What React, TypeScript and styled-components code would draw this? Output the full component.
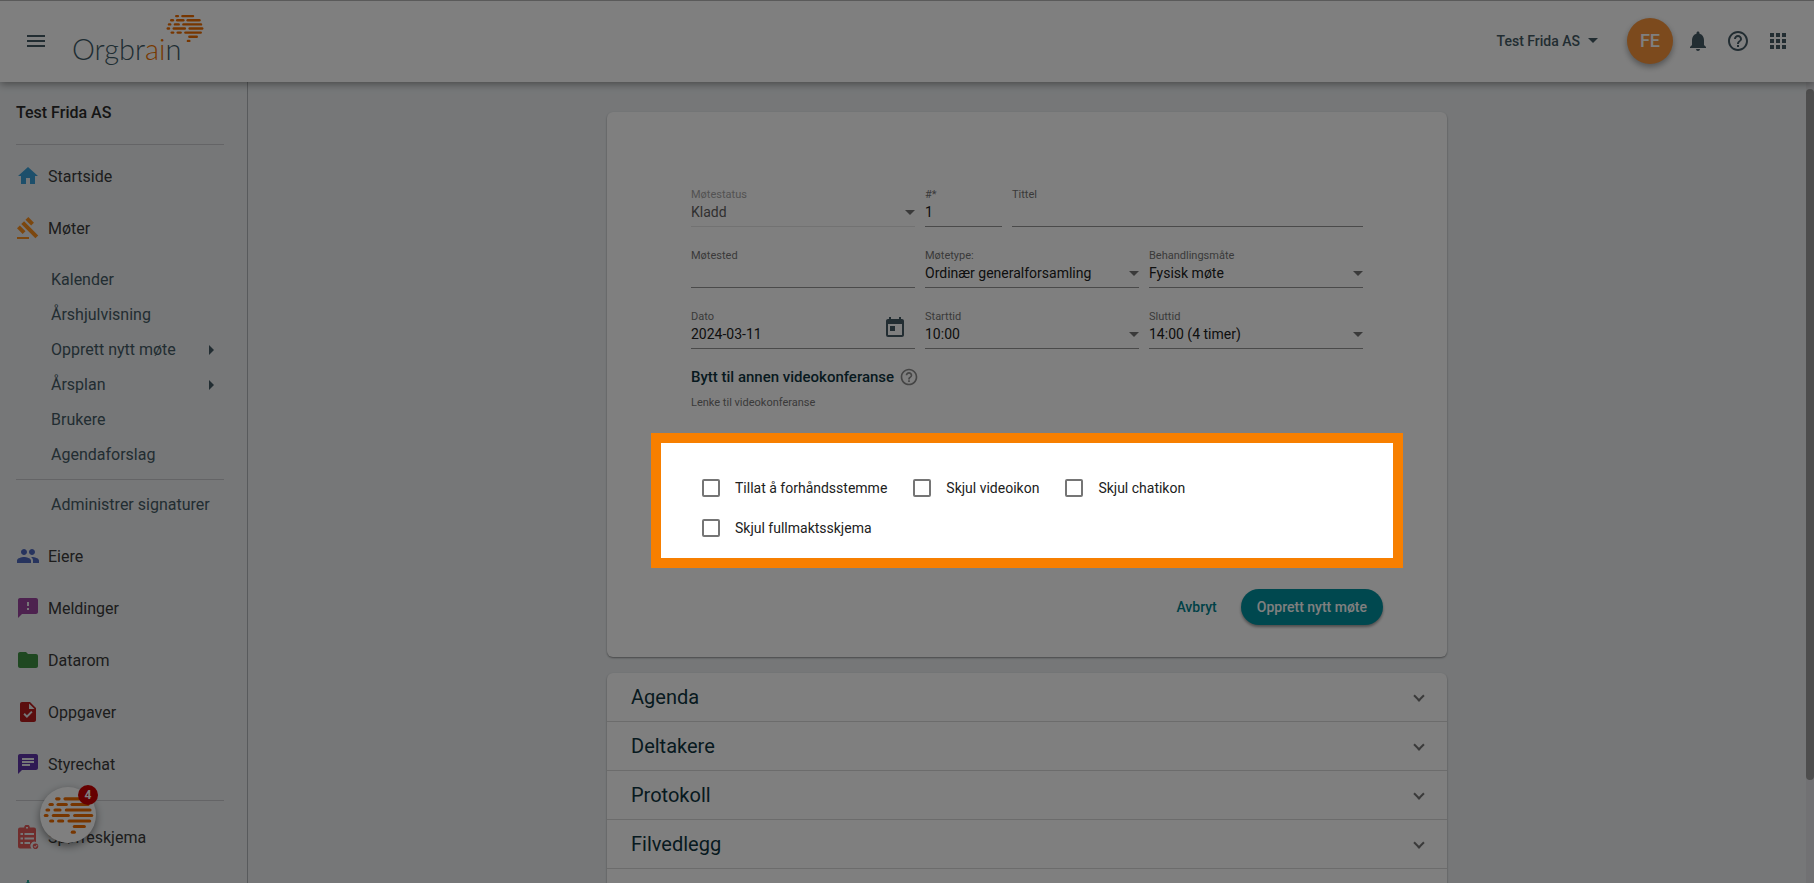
import React from 'react';
import styled, { createGlobalStyle } from 'styled-components';
import {
  MdApps,
  MdArchitecture,
  MdChat,
  MdFeedback,
  MdFolder,
  MdGavel,
  MdHelpOutline,
  MdHome,
  MdMenu,
  MdNotifications,
  MdPeople,
  MdTask,
  MdToday,
} from 'react-icons/md';

const GlobalStyle = createGlobalStyle`
  *, *::before, *::after { box-sizing: border-box; }
  body {
    margin: 0;
    overflow: hidden;
    background: #eceff1;
    color: #212121;
    font-family: Roboto, "Liberation Sans", sans-serif;
    font-size: 14px;
  }
  button, input, select { font: inherit; color: inherit; }
  button { background: none; border: 0; padding: 0; cursor: pointer; }
  a { color: inherit; text-decoration: none; }
`;

const Page = styled.div`
  display: flex;
  flex-direction: column;
  height: 100vh;
`;

/* ---------- top bar ---------- */

const TopBar = styled.header`
  position: relative;
  z-index: 2;
  display: flex;
  align-items: center;
  flex: none;
  height: 82px;
  padding: 0 24px 2px;
  background: #fff;
  border-top: 1px solid #b4b4b4;
  box-shadow: 0 2px 8px rgba(0, 0, 0, 0.4);
  color: #455a64;
`;

const IconButton = styled.button`
  display: flex;
  width: 24px;
  height: 24px;
  svg { width: 24px; height: 24px; }
`;

const LogoLink = styled.a`
  position: relative;
  margin-left: 24px;
  padding-top: 16px;
  font-family: Lato, "Open Sans", sans-serif;
  font-size: 29px;
  font-weight: 300;
  line-height: 40px;
  color: #3f5a66;
  span { color: #ef7300; }
  svg {
    position: absolute;
    left: 94px;
    top: 1px;
    width: 38px;
    height: 29px;
  }
`;

const TopActions = styled.div`
  display: flex;
  align-items: center;
  gap: 13px;
  margin-left: auto;
`;

const IconGroup = styled.div`
  display: flex;
  gap: 16px;
`;

const Triangle = styled.i<{ $dir?: 'down' | 'right' }>`
  flex: none;
  width: 0;
  height: 0;
  border: 5px solid transparent;
  ${p => (p.$dir === 'right'
    ? 'border-left-color: currentColor; border-right-width: 0;'
    : 'border-top-color: currentColor; border-bottom-width: 0;')}
`;

const OrgSwitch = styled.button`
  display: flex;
  align-items: center;
  gap: 8px;
  margin-right: 16px;
  font-weight: 500;
`;

const Avatar = styled.button`
  width: 46px;
  height: 46px;
  border-radius: 50%;
  background: #f8943a;
  color: #fff;
  font-size: 18px;
  font-weight: 500;
  box-shadow: 0 3px 6px rgba(0, 0, 0, 0.35);
`;

/* ---------- side navigation ---------- */

const Body = styled.div`
  display: flex;
  flex: 1;
  min-height: 0;
`;

const Sidebar = styled.nav`
  flex: none;
  width: 248px;
  padding: 19px 23px 0 16px;
  border-right: 1px solid #b0b4b8;
  overflow: hidden;
  font-size: 16px;
`;

const OrgName = styled.h2`
  margin: 0 0 19px;
  font-size: 16px;
  font-weight: 500;
  line-height: 24px;
  color: #2a2a2a;
`;

const Divider = styled.hr<{ $before?: number; $after: number }>`
  height: 1px;
  margin: ${p => p.$before ?? 0}px 0 ${p => p.$after}px;
  border: 0;
  background: #c8c9cc;
`;

const NavItem = styled.a<{ $tint: string }>`
  display: flex;
  align-items: center;
  gap: 8px;
  height: 52px;
  color: #3a3a3a;
  svg { flex: none; width: 24px; height: 24px; color: ${p => p.$tint}; }
`;

const SubList = styled.div`
  padding: 8px 0;
`;

const SubItem = styled.a`
  display: flex;
  align-items: center;
  justify-content: space-between;
  height: 35px;
  padding: 0 10px 0 35px;
  color: #455a64;
  white-space: nowrap;
`;

/* ---------- content ---------- */

const Main = styled.main`
  flex: 1;
  min-width: 0;
  padding: 30px 24px 0;
  overflow: hidden;
`;

const ScrollTrack = styled.div`
  flex: none;
  width: 8px;
  padding-top: 7px;
  background: #e2e3e6;
`;

const ScrollThumb = styled.div`
  height: 87%;
  border-radius: 4px;
  background: #9a9a9a;
`;

const Card = styled.section`
  max-width: 840px;
  margin: 0 auto 16px;
  border-radius: 6px;
  background: #fff;
  box-shadow: 0 1px 2px rgba(0, 0, 0, 0.4);
`;

const MeetingForm = styled.form`
  padding: 75px 10% 32px;
`;

const FieldGrid = styled.div`
  display: grid;
  grid-template-columns: repeat(3, 1fr);
  row-gap: 21px;
`;

const FieldPair = styled.div`
  display: grid;
  grid-column: span 2;
  grid-template-columns: 87px 1fr;
`;

const FieldBox = styled.div<{ $indent?: boolean; $disabled?: boolean }>`
  display: flex;
  margin-left: ${p => (p.$indent ? 10 : 0)}px;
  height: 40px;
  border-bottom: 1px solid ${p => (p.$disabled ? '#e4e4e4' : '#949494')};
  color: ${p => (p.$disabled ? '#616161' : '#212121')};
  label {
    display: block;
    height: 14px;
    font-size: 11px;
    line-height: 16px;
    color: ${p => (p.$disabled ? '#a6a6a6' : '#757575')};
  }
`;

const FieldMain = styled.div`
  flex: 1;
  min-width: 0;
`;

const Control = styled.div`
  display: flex;
  align-items: center;
  height: 22px;
  color: inherit;
  input, select {
    flex: 1;
    min-width: 0;
    width: 100%;
    height: 22px;
    padding: 0;
    border: 0;
    outline: 0;
    background: transparent;
    color: inherit;
    opacity: 1;
    appearance: none;
  }
  i { color: #757575; }
`;

const DateButton = styled(IconButton)`
  margin: 7px 8px 0 0;
  color: #455a64;
`;

const VideoHeading = styled.button`
  display: flex;
  align-items: center;
  gap: 5px;
  height: 20px;
  margin-top: 18px;
  font-size: 15px;
  font-weight: 500;
  color: #0f3440;
  svg { width: 20px; height: 20px; color: #8a8a8a; }
`;

const VideoLink = styled.p`
  margin: 8px 0 22px;
  font-size: 11px;
  line-height: 16px;
  color: #757575;
`;

const Shade = styled.div`
  position: fixed;
  inset: 0;
  z-index: 40;
  background: rgba(0, 0, 0, 0.5);
  pointer-events: none;
`;

const Spotlight = styled.fieldset`
  position: relative;
  z-index: 50;
  display: flex;
  flex-wrap: wrap;
  column-gap: 26px;
  min-width: 0;
  margin: 0 -40px;
  padding: 25px 200px 10px 41px;
  border: 10px solid #f77f00;
  background: #fff;
`;

const CheckLabel = styled.label`
  display: flex;
  align-items: center;
  gap: 15px;
  height: 40px;
  input {
    width: 18px;
    height: 18px;
    margin: 0;
    border: 2px solid #757575;
    border-radius: 2px;
    appearance: none;
  }
  input:checked { background: #00838f; }
`;

const FormActions = styled.div`
  display: flex;
  justify-content: flex-end;
  gap: 8px;
  margin: 21px -20px 0 0;
`;

const ActionButton = styled.button<{ $primary?: boolean }>`
  height: 36px;
  padding: 0 16px;
  border-radius: 18px;
  font-weight: 500;
  color: ${p => (p.$primary ? '#fff' : '#00838f')};
  background: ${p => (p.$primary ? '#00909e' : 'transparent')};
  box-shadow: ${p => (p.$primary ? '0 2px 3px rgba(0, 0, 0, 0.4)' : 'none')};
`;

const PanelHeader = styled.button`
  display: flex;
  align-items: center;
  justify-content: space-between;
  width: 100%;
  height: 49px;
  padding: 0 24px;
  border-bottom: 1px solid #d8d8d8;
  font-size: 20px;
  color: #0f3440;
`;

const Chevron = styled.i`
  width: 8px;
  height: 8px;
  margin-bottom: 2px;
  border: solid #757575;
  border-width: 0 2px 2px 0;
  transform: rotate(45deg);
`;

/* ---------- floating chat ---------- */

const ChatButton = styled.button`
  position: fixed;
  left: 40px;
  bottom: 40px;
  z-index: 30;
  display: flex;
  align-items: center;
  justify-content: center;
  width: 56px;
  height: 56px;
  border-radius: 50%;
  background: #fff;
  box-shadow: 0 3px 8px rgba(0, 0, 0, 0.45);
  svg { width: 51px; height: 39px; }
`;

const ChatBadge = styled.span`
  position: absolute;
  top: -2px;
  right: -2px;
  width: 20px;
  height: 20px;
  border-radius: 50%;
  background: #cc0000;
  color: #fff;
  font-size: 12px;
  font-weight: 700;
  line-height: 20px;
`;

const BRAIN_DASHES = [
  [41, 5, 48], [66, 5, 109],
  [21, 22, 28], [45, 22, 70], [87, 22, 135],
  [12, 38.5, 17], [36, 38.5, 51], [70, 38.5, 141],
  [7, 55, 12], [31, 55, 76], [95, 55, 146],
  [23, 71.5, 29], [47, 71.5, 59], [78, 71.5, 140],
  [94, 88, 124],
  [88, 105, 94],
];

function Brain() {
  return (
    <svg viewBox="0 0 153 110" fill="none" stroke="#ef6c00" strokeWidth="9.5" strokeLinecap="round" aria-hidden="true">
      {BRAIN_DASHES.map(([x1, y, x2]) => (
        <path key={`${x1}-${y}`} d={`M${x1} ${y}H${x2}`} />
      ))}
    </svg>
  );
}

function SurveyIcon() {
  return (
    <svg viewBox="0 0 24 24" fill="currentColor" aria-hidden="true">
      <path
        fillRule="evenodd"
        d="M4 2.500h4.200a2.800 2.800 0 0 1 5.600 0H18a2 2 0 0 1 2 2V17a4 4 0 0 0-4.400 6.500H4a2 2 0 0 1-2-2v-17a2 2 0 0 1 2-2zM10 2v1.500h2V2zM4.500 8v2H7V8zm4 0v2H18V8zm-4 4.500v2H7v-2zm4 0v2H18v-2zm-4 4.500v2H7v-2zm4 0v2H14v-2z"
      />
      <path fillRule="evenodd" d="M19.500 18.500a2.800 2.800 0 1 1 0 5.600 2.800 2.800 0 0 1 0-5.600zm1.300 1.300-1.700 1.900-.8-.8-.6.600 1.400 1.500 2.400-2.600z" />
    </svg>
  );
}

interface FieldProps {
  id: string;
  label: string;
  value?: string;
  kind?: 'text' | 'select';
  indent?: boolean;
  disabled?: boolean;
  action?: React.ReactNode;
}

function Field({ id, label, value = '', kind = 'text', indent, disabled, action }: FieldProps) {
  return (
    <FieldBox $indent={indent} $disabled={disabled}>
      <FieldMain>
        <label htmlFor={id}>{label}</label>
        <Control>
          {kind === 'select' ? (
            <>
              <select id={id} disabled={disabled} defaultValue={value}>
                <option>{value}</option>
              </select>
              <Triangle />
            </>
          ) : (
            <input id={id} type="text" defaultValue={value} />
          )}
        </Control>
      </FieldMain>
      {action}
    </FieldBox>
  );
}

const MEETING_LINKS = [
  { text: 'Kalender' },
  { text: 'Årshjulvisning' },
  { text: 'Opprett nytt møte', more: true },
  { text: 'Årsplan', more: true },
  { text: 'Brukere' },
  { text: 'Agendaforslag' },
];

const OPTIONS = ['Tillat å forhåndsstemme', 'Skjul videoikon', 'Skjul chatikon', 'Skjul fullmaktsskjema'];
const PANELS = ['Agenda', 'Deltakere', 'Protokoll', 'Filvedlegg', ''];

export default function App() {
  return (
    <Page>
      <GlobalStyle />
      <TopBar>
        <IconButton type="button" aria-label="Meny"><MdMenu /></IconButton>
        <LogoLink href="#">
          Orgbr<span>ai</span>n
          <Brain />
        </LogoLink>
        <TopActions>
          <OrgSwitch type="button">Test Frida AS<Triangle /></OrgSwitch>
          <Avatar type="button">FE</Avatar>
          <IconGroup>
            <IconButton type="button" aria-label="Varsler"><MdNotifications /></IconButton>
            <IconButton type="button" aria-label="Hjelp"><MdHelpOutline /></IconButton>
            <IconButton type="button" aria-label="Apper"><MdApps /></IconButton>
          </IconGroup>
        </TopActions>
      </TopBar>

      <Body>
        <Sidebar>
          <OrgName>Test Frida AS</OrgName>
          <Divider $after={5} />
          <NavItem href="#" $tint="#3a9fd6"><MdHome />Startside</NavItem>
          <NavItem href="#" $tint="#f98e1d"><MdGavel />Møter</NavItem>
          <SubList>
            {MEETING_LINKS.map(link => (
              <SubItem href="#" key={link.text}>
                {link.text}
                {link.more && <Triangle $dir="right" />}
              </SubItem>
            ))}
            <Divider $before={7} $after={7} />
            <SubItem href="#">Administrer signaturer</SubItem>
          </SubList>
          <NavItem href="#" $tint="#4f69bd"><MdPeople />Eiere</NavItem>
          <NavItem href="#" $tint="#9b449f"><MdFeedback />Meldinger</NavItem>
          <NavItem href="#" $tint="#3f9142"><MdFolder />Datarom</NavItem>
          <NavItem href="#" $tint="#b71c1c"><MdTask />Oppgaver</NavItem>
          <NavItem href="#" $tint="#5e35a8"><MdChat />Styrechat</NavItem>
          <Divider $before={10} $after={10} />
          <NavItem href="#" $tint="#e05a58"><SurveyIcon />Spørreskjema</NavItem>
          <NavItem href="#" $tint="#26a69a" aria-label="Verktøy"><MdArchitecture /></NavItem>
        </Sidebar>

        <Main>
          <Card>
            <MeetingForm>
              <FieldGrid>
                <Field id="status" label="Møtestatus" value="Kladd" kind="select" disabled />
                <FieldPair>
                  <Field id="number" label="#*" value="1" indent />
                  <Field id="title" label="Tittel" indent />
                </FieldPair>
                <Field id="place" label="Møtested" />
                <Field id="type" label="Møtetype:" value="Ordinær generalforsamling" kind="select" indent />
                <Field id="mode" label="Behandlingsmåte" value="Fysisk møte" kind="select" indent />
                <Field
                  id="date"
                  label="Dato"
                  value="2024-03-11"
                  action={<DateButton type="button" aria-label="Velg dato"><MdToday /></DateButton>}
                />
                <Field id="start" label="Starttid" value="10:00" kind="select" indent />
                <Field id="end" label="Sluttid" value="14:00 (4 timer)" kind="select" indent />
              </FieldGrid>

              <VideoHeading type="button">
                Bytt til annen videokonferanse
                <MdHelpOutline />
              </VideoHeading>
              <VideoLink>Lenke til videokonferanse</VideoLink>

              <Spotlight>
                {OPTIONS.map(option => (
                  <CheckLabel key={option}>
                    <input type="checkbox" />
                    {option}
                  </CheckLabel>
                ))}
              </Spotlight>

              <FormActions>
                <ActionButton type="button">Avbryt</ActionButton>
                <ActionButton type="button" $primary>Opprett nytt møte</ActionButton>
              </FormActions>
            </MeetingForm>
          </Card>

          <Card>
            {PANELS.map(name => (
              <PanelHeader type="button" key={name} aria-label={name || 'Flere'}>
                {name}
                <Chevron />
              </PanelHeader>
            ))}
          </Card>
        </Main>

        <ScrollTrack>
          <ScrollThumb />
        </ScrollTrack>
      </Body>

      <ChatButton type="button" aria-label="Chat">
        <Brain />
        <ChatBadge>4</ChatBadge>
      </ChatButton>
      <Shade />
    </Page>
  );
}
